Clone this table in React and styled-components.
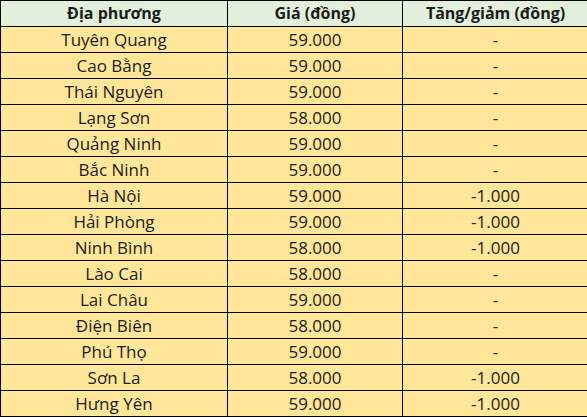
import React from 'react';
import styled, { createGlobalStyle } from 'styled-components';

const GlobalStyle = createGlobalStyle`
  html, body {
    margin: 0;
    padding: 0;
    background: #ffffff;
  }
`;

const Table = styled.table`
  width: 586px;
  border-collapse: collapse;
  table-layout: fixed;
  font-family: "Open Sans", "Liberation Sans", sans-serif;
  font-size: 17px;
  color: #1c1c1c;
`;

const HeadCell = styled.th`
  height: 25px;
  padding: 0;
  border: 1px solid #000;
  background: #e2efda;
  font-size: 16px;
  font-weight: 700;
  line-height: 25px;
  text-align: center;
  width: ${({ w }) => w}px;
`;

const Cell = styled.td`
  height: 25px;
  padding: 0;
  border: 1px solid #000;
  background: #ffe699;
  text-align: center;
  line-height: 25px;
`;

const rows = [
  ['Tuyên Quang', '59.000', '-'],
  ['Cao Bằng', '59.000', '-'],
  ['Thái Nguyên', '59.000', '-'],
  ['Lạng Sơn', '58.000', '-'],
  ['Quảng Ninh', '59.000', '-'],
  ['Bắc Ninh', '59.000', '-'],
  ['Hà Nội', '59.000', '-1.000'],
  ['Hải Phòng', '59.000', '-1.000'],
  ['Ninh Bình', '58.000', '-1.000'],
  ['Lào Cai', '58.000', '-'],
  ['Lai Châu', '59.000', '-'],
  ['Điện Biên', '58.000', '-'],
  ['Phú Thọ', '59.000', '-'],
  ['Sơn La', '58.000', '-1.000'],
  ['Hưng Yên', '59.000', '-1.000'],
];

export default function App() {
  return (
    <>
      <GlobalStyle />
      <Table>
        <thead>
          <tr>
            <HeadCell w={226}>Địa phương</HeadCell>
            <HeadCell w={174}>Giá (đồng)</HeadCell>
            <HeadCell w={185}>Tăng/giảm (đồng)</HeadCell>
          </tr>
        </thead>
        <tbody>
          {rows.map(([place, price, change]) => (
            <tr key={place}>
              <Cell>{place}</Cell>
              <Cell>{price}</Cell>
              <Cell>{change}</Cell>
            </tr>
          ))}
        </tbody>
      </Table>
    </>
  );
}
